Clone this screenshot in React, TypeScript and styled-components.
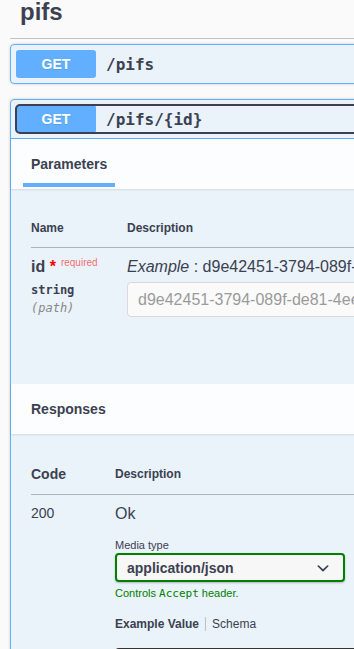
import React from 'react';
import styled, { createGlobalStyle } from 'styled-components';

const GlobalStyle = createGlobalStyle`
  html, body {
    margin: 0;
    padding: 0;
    background: #fafafa;
    overflow: hidden;
  }
  body {
    font-family: "Liberation Sans", Arial, sans-serif;
    color: #3b4151;
  }
`;

const Page = styled.div`
  width: 720px;
  padding-left: 10px;
`;

const TagTitle = styled.h3`
  margin: 0;
  padding: 0 0 14px 10px;
  font-size: 24px;
  line-height: 24px;
  font-weight: 700;
  color: #3b4151;
  border-bottom: 1px solid rgba(59, 65, 81, 0.3);
`;

const OpList = styled.div`
  padding-top: 5px;
`;

const Opblock = styled.div`
  margin-bottom: 15px;
  border: 1px solid #61affe;
  border-radius: 4px;
  background: rgba(97, 175, 254, 0.1);
  box-shadow: 0 0 3px rgba(0, 0, 0, 0.19);
`;

const Summary = styled.div<{ $open?: boolean }>`
  display: flex;
  align-items: center;
  padding: 5px;
  border-bottom: ${p => (p.$open ? '1px solid #61affe' : 'none')};
`;

const SummaryControl = styled.button<{ $focused?: boolean }>`
  display: flex;
  align-items: center;
  flex: 1;
  padding: 0;
  border: 0;
  background: transparent;
  border-radius: 4px;
  cursor: pointer;
  text-align: left;
  font: inherit;
  color: inherit;
  outline: ${p => (p.$focused ? '2px solid #3b4151' : 'none')};
  outline-offset: -1px;
`;

const MethodBadge = styled.span`
  min-width: 80px;
  height: 28px;
  display: flex;
  align-items: center;
  justify-content: center;
  border-radius: 3px;
  background: #61affe;
  color: #fff;
  font-size: 14px;
  font-weight: 700;
  text-shadow: 0 1px 0 rgba(0, 0, 0, 0.1);
`;

const OpPath = styled.span`
  padding: 0 10px;
  font-family: "DejaVu Sans Mono", monospace;
  font-size: 16px;
  font-weight: 700;
  color: #3b4151;
`;

const SectionHeader = styled.div`
  position: relative;
  height: 50px;
  padding: 0 20px;
  display: flex;
  align-items: center;
  background: rgba(255, 255, 255, 0.8);
  box-shadow: 0 1px 2px rgba(0, 0, 0, 0.1);
`;

const SectionTitle = styled.h4<{ $active?: boolean }>`
  position: relative;
  margin: 0;
  height: 100%;
  display: flex;
  align-items: center;
  font-size: 14px;
  font-weight: 700;
  color: #3b4151;

  &::after {
    content: '';
    display: ${p => (p.$active ? 'block' : 'none')};
    position: absolute;
    left: -8px;
    right: -8px;
    bottom: 2px;
    height: 4px;
    background: #61affe;
  }
`;

const SectionBody = styled.div<{ $top: number; $bottom: number }>`
  padding: ${p => p.$top}px 20px ${p => p.$bottom}px;
`;

const HeadRow = styled.div<{ $lh: number }>`
  display: flex;
  align-items: center;
  padding: 12px 0;
  line-height: ${p => p.$lh}px;
  border-bottom: 1px solid rgba(59, 65, 81, 0.35);
`;

const HeadCell = styled.div<{ $w?: number; $size?: number }>`
  width: ${p => (p.$w ? `${p.$w}px` : 'auto')};
  flex-shrink: 0;
  font-size: ${p => p.$size ?? 12}px;
  font-weight: 700;
`;

const Row = styled.div`
  display: flex;
  padding-top: 10px;
`;

const Cell = styled.div<{ $w?: number }>`
  width: ${p => (p.$w ? `${p.$w}px` : 'auto')};
  flex: ${p => (p.$w ? '0 0 auto' : '1')};
`;

const ParamName = styled.div`
  font-size: 16px;
  line-height: 18px;
  font-weight: 700;
  white-space: nowrap;

  span {
    color: red;
  }

  span::after {
    content: 'required';
    position: relative;
    top: -6px;
    padding: 5px;
    font-size: 10px;
    font-weight: 400;
    color: rgba(255, 0, 0, 0.6);
  }
`;

const ParamType = styled.div`
  padding-top: 5px;
  font-family: "DejaVu Sans Mono", monospace;
  font-size: 12px;
  line-height: 14px;
  font-weight: 700;
`;

const ParamIn = styled.div`
  padding-top: 4px;
  font-family: "DejaVu Sans Mono", monospace;
  font-size: 12px;
  line-height: 14px;
  font-style: italic;
  color: #888;
`;

const ExampleLine = styled.div`
  font-size: 16px;
  line-height: 18px;
  white-space: nowrap;

  i {
    font-style: italic;
  }
`;

const ParamInput = styled.input`
  display: block;
  margin-top: 6px;
  width: 340px;
  height: 35px;
  box-sizing: border-box;
  padding: 0 10px;
  border: 1px solid #d9d9d9;
  border-radius: 4px;
  background: #fafafa;
  font-family: "Liberation Sans", Arial, sans-serif;
  font-size: 16px;
  color: #3b4151;
  outline: none;

  &::placeholder {
    color: #9a9a9a;
  }
`;

const StatusCode = styled.div`
  font-size: 14px;
  line-height: 16px;
`;

const ResponseDesc = styled.div`
  font-size: 16px;
  line-height: 18px;
`;

const SmallLabel = styled.div`
  margin-top: 16px;
  font-size: 11px;
  line-height: 13px;
  color: #3b4151;
`;

const MediaSelect = styled.div`
  margin-top: 1px;
  width: 230px;
  height: 29px;
  box-sizing: border-box;
  display: flex;
  align-items: center;
  justify-content: space-between;
  padding: 0 8px 0 10px;
  border: 2px solid #008000;
  border-radius: 4px;
  background: #f7f7f7;
  box-shadow: 0 1px 2px rgba(0, 0, 0, 0.25);
  font-size: 14px;
  font-weight: 700;
  color: #3b4151;
`;

const AcceptMessage = styled.div`
  margin-top: 5px;
  font-size: 11px;
  line-height: 13px;
  color: #008000;

  code {
    font-family: "DejaVu Sans Mono", monospace;
    font-size: 11px;
  }
`;

const Tabs = styled.div`
  display: flex;
  margin-top: 17px;
  font-size: 12px;
  line-height: 14px;
`;

const Tab = styled.div<{ $active?: boolean; $first?: boolean }>`
  font-weight: ${p => (p.$active ? 700 : 400)};
  padding: ${p => (p.$first ? '0 6px 0 0' : '0 0 0 6px')};
  border-right: ${p => (p.$first ? '1px solid rgba(0, 0, 0, 0.2)' : 'none')};
`;

const CodeBlock = styled.div`
  margin-top: 17px;
  width: 500px;
  height: 120px;
  border-radius: 4px;
  background: #333;
`;

function Chevron() {
  return (
    <svg width="24" height="24" viewBox="0 0 20 20" fill="#3b4151">
      <path d="M13.418 7.859a.695.695 0 01.978 0 .68.68 0 010 .969l-3.908 3.83a.697.697 0 01-.979 0l-3.908-3.83a.68.68 0 010-.969.695.695 0 01.978 0L10 11l3.418-3.141z" />
    </svg>
  );
}

export default function App() {
  return (
    <Page>
      <GlobalStyle />
      <TagTitle>pifs</TagTitle>

      <OpList>
        <Opblock>
          <Summary>
            <SummaryControl>
              <MethodBadge>GET</MethodBadge>
              <OpPath>/pifs</OpPath>
            </SummaryControl>
          </Summary>
        </Opblock>

        <Opblock>
          <Summary $open>
            <SummaryControl $focused>
              <MethodBadge>GET</MethodBadge>
              <OpPath>/pifs/{'{id}'}</OpPath>
            </SummaryControl>
          </Summary>

          <SectionHeader>
            <SectionTitle $active>Parameters</SectionTitle>
          </SectionHeader>
          <SectionBody $top={21} $bottom={67}>
            <HeadRow $lh={13}>
              <HeadCell $w={96}>Name</HeadCell>
              <HeadCell>Description</HeadCell>
            </HeadRow>
            <Row>
              <Cell $w={96}>
                <ParamName>id<span>&nbsp;*</span></ParamName>
                <ParamType>string</ParamType>
                <ParamIn>(path)</ParamIn>
              </Cell>
              <Cell>
                <ExampleLine><i>Example</i> : d9e42451-3794-089f-de81-4ee2c1a7b3d5</ExampleLine>
                <ParamInput placeholder="d9e42451-3794-089f-de81-4ee2c1a7b3d5" />
              </Cell>
            </Row>
          </SectionBody>

          <SectionHeader>
            <SectionTitle>Responses</SectionTitle>
          </SectionHeader>
          <SectionBody $top={20} $bottom={40}>
            <HeadRow $lh={16}>
              <HeadCell $w={84} $size={14}>Code</HeadCell>
              <HeadCell>Description</HeadCell>
            </HeadRow>
            <Row>
              <Cell $w={84}>
                <StatusCode>200</StatusCode>
              </Cell>
              <Cell>
                <ResponseDesc>Ok</ResponseDesc>
                <SmallLabel>Media type</SmallLabel>
                <MediaSelect>
                  application/json
                  <Chevron />
                </MediaSelect>
                <AcceptMessage>Controls <code>Accept</code> header.</AcceptMessage>
                <Tabs>
                  <Tab $active $first>Example Value</Tab>
                  <Tab>Schema</Tab>
                </Tabs>
                <CodeBlock />
              </Cell>
            </Row>
          </SectionBody>
        </Opblock>
      </OpList>
    </Page>
  );
}
